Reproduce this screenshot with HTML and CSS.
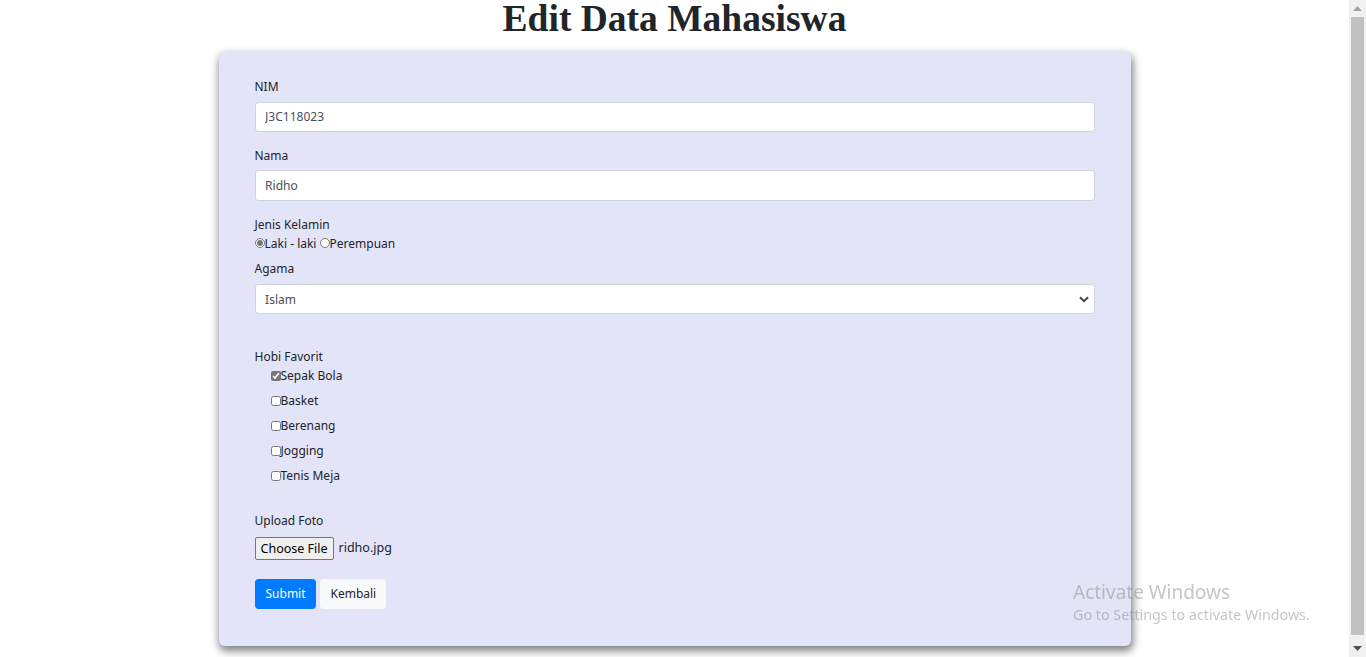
FILE: index.html
```html
<!DOCTYPE html>
<html lang="id">
<head>
<meta charset="utf-8">
<title>Edit Data Mahasiswa</title>
<link rel="stylesheet" href="styles.css">
</head>
<body>
<h1 class="title">Edit Data Mahasiswa</h1>
<div class="card">
  <form class="form">
    <div class="group">
      <label class="lbl">NIM</label>
      <input class="control" type="text" value="J3C118023">
    </div>
    <div class="group">
      <label class="lbl">Nama</label>
      <input class="control" type="text" value="Ridho">
    </div>
    <div class="group group-tight">
      <div class="lbl-plain">Jenis Kelamin</div>
      <div class="radio-row"><input class="radio" type="radio" name="jk" checked>Laki - laki <input class="radio" type="radio" name="jk">Perempuan</div>
    </div>
    <div class="group">
      <label class="lbl">Agama</label>
      <select class="control select">
        <option>Islam</option>
      </select>
    </div>
    <div class="spacer"></div>
    <div class="group group-hobi">
      <div class="lbl-plain">Hobi Favorit</div>
      <label class="check-row"><input class="check" type="checkbox" checked>Sepak Bola</label>
      <label class="check-row"><input class="check" type="checkbox">Basket</label>
      <label class="check-row"><input class="check" type="checkbox">Berenang</label>
      <label class="check-row"><input class="check" type="checkbox">Jogging</label>
      <label class="check-row"><input class="check" type="checkbox">Tenis Meja</label>
    </div>
    <div class="group group-file">
      <label class="lbl">Upload Foto</label>
      <div class="file"><button type="button" class="file-btn">Choose File</button><span class="file-name">ridho.jpg</span></div>
    </div>
    <div class="actions">
      <button type="button" class="btn btn-primary">Submit</button>
      <button type="button" class="btn btn-light">Kembali</button>
    </div>
  </form>
</div>
<div class="watermark">
  <div class="wm-title">Activate Windows</div>
  <div class="wm-sub">Go to Settings to activate Windows.</div>
</div>
<div class="scrollbar">
  <div class="sb-btn">
    <svg width="9" height="5" viewBox="0 0 9 5"><path d="M4.5 0L9 5H0z" fill="#a3a3a3"/></svg>
  </div>
  <div class="sb-track"><div class="sb-thumb"></div></div>
  <div class="sb-btn">
    <svg width="9" height="5" viewBox="0 0 9 5"><path d="M0 0H9L4.5 5z" fill="#505050"/></svg>
  </div>
</div>
</body>
</html>
```
FILE: styles.css
```css
html {
  margin: 0;
  padding: 0;
  overflow: hidden;
}
body {
  margin: 0;
  padding: 0 17px 0 0;
  font-family: "Noto Sans", "Open Sans", sans-serif;
  font-size: 12px;
  line-height: 19.2px;
  color: #212529;
  background: #fff;
}
.title {
  font-family: "Liberation Serif", "Times New Roman", serif;
  font-weight: bold;
  font-size: 37.5px;
  line-height: 38px;
  text-align: center;
  margin: 0 0 14px;
  color: #212529;
}
.card {
  width: 912px;
  box-sizing: border-box;
  margin: 0 auto 18px;
  padding: 25px 36px 24px;
  background: #e4e4f8;
  border-radius: 6px;
  box-shadow: 1px 4px 9px 1px rgba(0, 0, 0, 0.5);
}
.form {
  margin: 0;
}
.group {
  margin-bottom: 13.8px;
}
.group-tight {
  margin-bottom: 6.4px;
}
.lbl {
  display: block;
  margin-bottom: 5.4px;
}
.lbl-plain {
  display: block;
}
.control {
  display: block;
  box-sizing: border-box;
  width: 100%;
  height: 30.4px;
  margin: 0;
  padding: 0 9.6px;
  border: 1px solid #ced4da;
  border-radius: 3.2px;
  background: #fff;
  font-family: inherit;
  font-size: 12px;
  color: #495057;
  outline: none;
}
.select {
  appearance: none;
  -webkit-appearance: none;
  background: #fff url("data:image/svg+xml;utf8,<svg xmlns='http://www.w3.org/2000/svg' viewBox='0 0 10 7'><path d='M1 1.2L5 5.2L9 1.2' fill='none' stroke='%23404448' stroke-width='2'/></svg>") no-repeat right 5px center;
  background-size: 10px 7px;
}
.radio-row {
  display: flex;
  align-items: center;
  white-space: pre;
}
.radio, .check {
  margin: 0;
  width: 10px;
  height: 10px;
  accent-color: #767676;
}
.spacer {
  height: 19.2px;
}
.group-hobi {
  margin-bottom: 26.3px;
}
.check-row {
  display: flex;
  align-items: center;
  padding-left: 16px;
  margin-top: 5.8px;
}
.group-hobi .lbl-plain + .check-row {
  margin-top: -0.6px;
}
.file {
  display: flex;
  align-items: center;
  height: 24px;
}
.file-btn {
  box-sizing: border-box;
  height: 23px;
  margin: 0 5px 0 0;
  padding: 0 5px;
  font-family: inherit;
  font-size: 12.5px;
  color: #000;
  background: #efefef;
  border: 1px solid #767676;
  border-radius: 2px;
}
.file-name {
  font-size: 12.5px;
  color: #212529;
}
.group-file {
  margin-bottom: 18.5px;
}
.actions {
  display: flex;
  gap: 4px;
  margin-bottom: 13.5px;
}
.btn {
  box-sizing: border-box;
  height: 30.4px;
  padding: 0 10px;
  border: 1px solid transparent;
  border-radius: 3.2px;
  font-family: inherit;
  font-size: 12px;
  line-height: 19.2px;
}
.btn-primary {
  width: 61px;
  background: #007bff;
  border-color: #007bff;
  color: #fff;
}
.btn-light {
  width: 66px;
  background: #f8f9fa;
  border-color: #f8f9fa;
  color: #212529;
}
.watermark {
  position: fixed;
  left: 1073px;
  top: 580px;
  color: rgba(140, 140, 140, 0.5);
  font-family: "Noto Sans", "Open Sans", sans-serif;
  pointer-events: none;
}
.wm-title {
  font-size: 19px;
  line-height: 25px;
}
.wm-sub {
  font-size: 14.3px;
  line-height: 20px;
}
.scrollbar {
  position: fixed;
  top: 0;
  right: 0;
  width: 17px;
  height: 100vh;
  background: #f1f1f1;
  display: flex;
  flex-direction: column;
}
.sb-btn {
  height: 17px;
  flex: 0 0 17px;
  display: flex;
  align-items: center;
  justify-content: center;
}
.sb-track {
  flex: 1;
  display: flex;
  flex-direction: column;
}
.sb-thumb {
  height: 618px;
  margin: 0 2px;
  background: #c1c1c1;
}
```
